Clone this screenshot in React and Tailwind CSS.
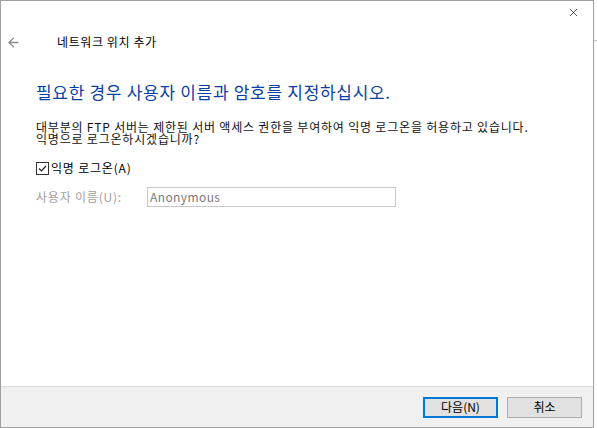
import { X, ArrowLeft } from "lucide-react";

const font = { fontFamily: '"Noto Sans CJK KR", "Noto Sans", sans-serif' };

function CheckBox() {
  return (
    <span className="flex h-[13px] w-[13px] items-center justify-center border border-[#333333] bg-white">
      <svg width="11" height="11" viewBox="0 0 11 11">
        <path d="M2 5.5 L4.5 8 L9 3" fill="none" stroke="#222" strokeWidth="1.2" />
      </svg>
    </span>
  );
}

export default function App() {
  return (
    <div className="flex h-[428px] w-[597px] bg-white text-black" style={font}>
      {/* 창 본체 */}
      <div className="flex h-full w-[594px] flex-col border border-[#a0a0a0] bg-white">
        {/* 닫기 버튼 줄 */}
        <div className="flex h-[23px] items-center justify-end pr-[13px]">
          <X size={13} strokeWidth={1.3} className="text-[#111]" />
        </div>

        {/* 제목 줄 */}
        <div className="flex h-[36px] items-center">
          <ArrowLeft size={15} strokeWidth={2.2} className="ml-[5px] text-[#8a8a8a]" />
          <span className="ml-[36px] text-[12px] leading-[16px] tracking-[0.6px]">네트워크 위치 추가</span>
        </div>

        {/* 내용 */}
        <div className="flex flex-1 flex-col pl-[35px]">
          <div className="mt-[21px] text-[17px] leading-[22px] tracking-[0.7px] text-[#0a3fa6]">
            필요한 경우 사용자 이름과 암호를 지정하십시오.
          </div>

          <div className="mt-[18px] text-[12px] leading-[12px] tracking-[0.8px] text-[#111]">
            <div>대부분의 FTP 서버는 제한된 서버 액세스 권한을 부여하여 익명 로그온을 허용하고 있습니다.</div>
            <div>익명으로 로그온하시겠습니까?</div>
          </div>

          <label className="mt-[16px] flex h-[14px] items-center gap-[2px] text-[12px] leading-[14px] tracking-[0.8px]">
            <CheckBox />
            <span>익명 로그온(A)</span>
          </label>

          <div className="mt-[12px] flex items-center">
            <span className="w-[111px] text-[12px] tracking-[0.8px] text-[#a0a0a0]">사용자 이름(U):</span>
            <div className="flex h-[20px] w-[249px] items-center border border-[#c8c8c8] bg-white pl-[2px] text-[12px] tracking-[0.4px] text-[#7a7a7a]">
              Anonymous
            </div>
          </div>
        </div>

        {/* 하단 버튼 영역 */}
        <div className="flex h-[41px] items-center justify-end gap-[9px] border-t border-[#dcdcdc] bg-[#f0f0f0] pr-[11px]">
          <button className="flex h-[21px] w-[75px] items-center justify-center border-2 border-[#0078d7] bg-[#e1e1e1] text-[12px]">
            다음(N)
          </button>
          <button className="flex h-[21px] w-[75px] items-center justify-center border border-[#adadad] bg-[#e1e1e1] text-[12px]">
            취소
          </button>
        </div>
      </div>

      {/* 오른쪽 가장자리 */}
      <div className="h-full flex-1 bg-[#fbfbfb]">
        <div className="mt-[40px] h-px bg-[#c8c8c8]" />
      </div>
    </div>
  );
}
